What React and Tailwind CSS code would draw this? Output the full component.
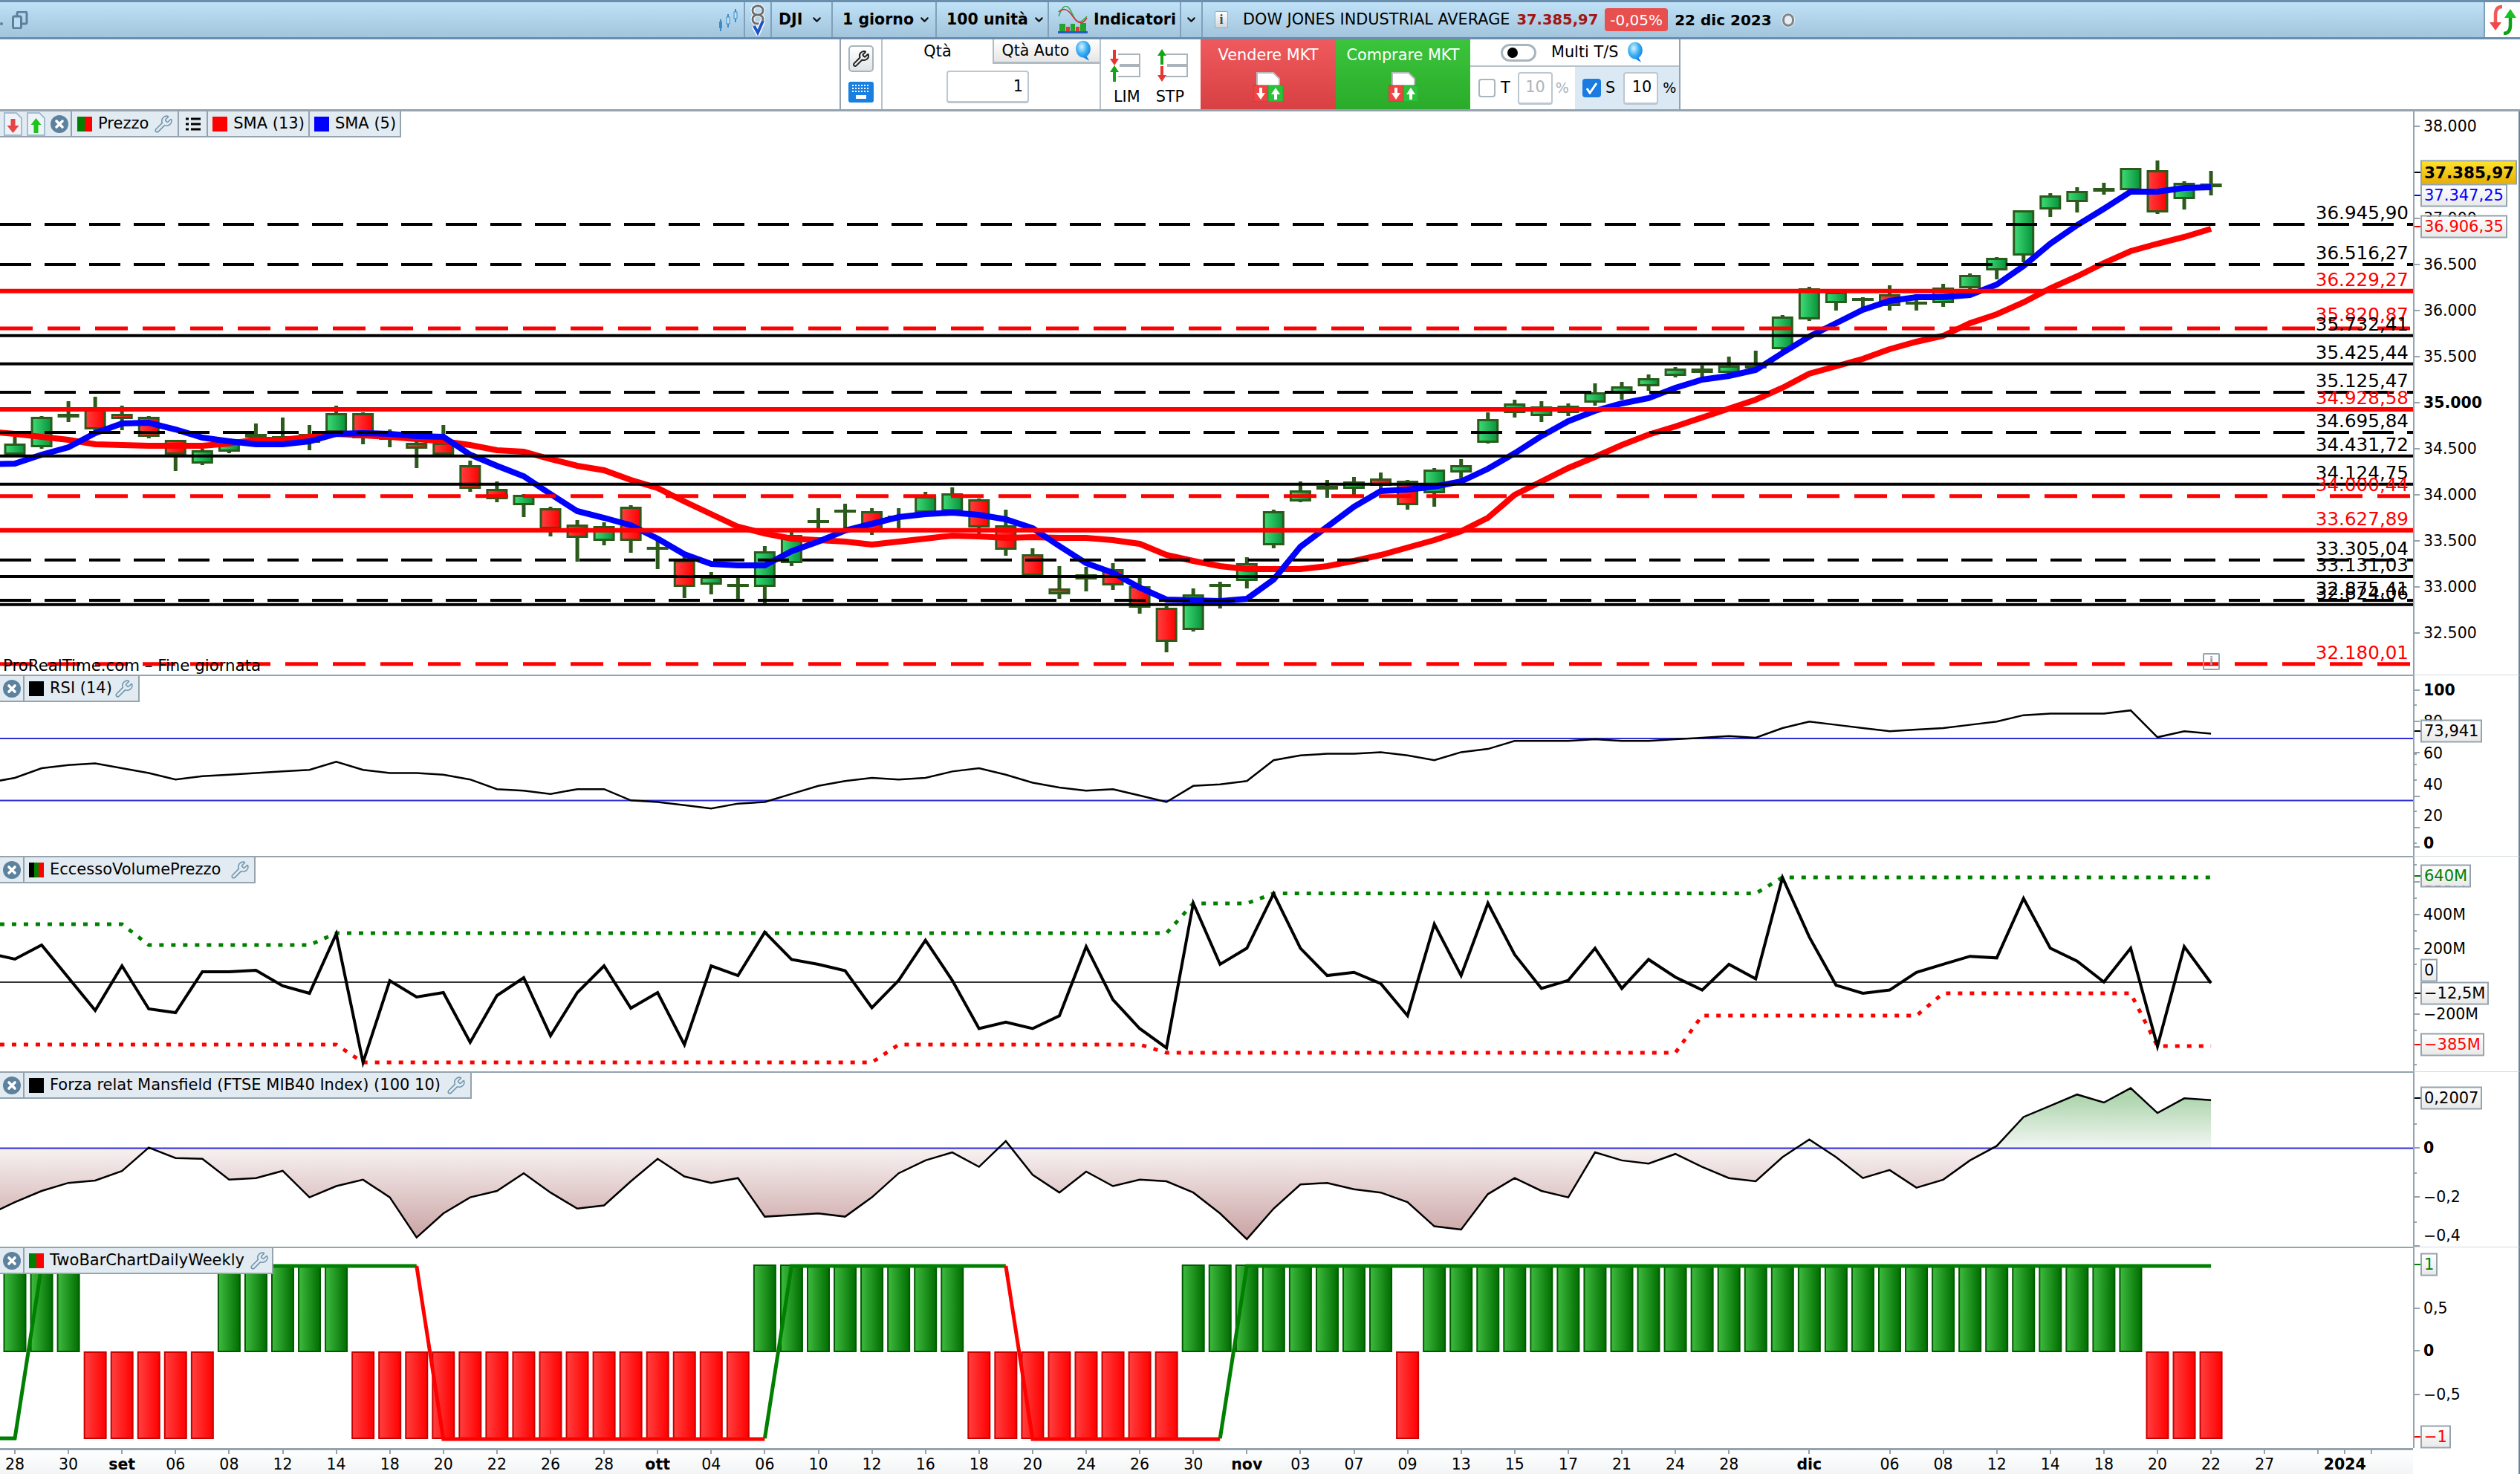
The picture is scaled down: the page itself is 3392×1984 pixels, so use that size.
import React from "react";
import { ChevronDown, Wrench } from "lucide-react";

const T = 3392 / 1568;
const X = (i) => 20 + 36.05 * i;
const pts = (arr) => arr.map((y, k) => `${X(k - 1)},${y}`).join(" ");

// [type, body top, body bottom, wick top, wick bottom]
const candles = [
  ["g", 597, 612, 588, 614], ["g", 561, 602, 560, 604], ["g", 557, 562, 540, 568], ["r", 548, 578, 534, 580],
  ["r", 557, 564, 546, 579], ["r", 561, 588, 560, 590], ["r", 592, 612, 592, 634], ["g", 606, 624, 604, 626],
  ["g", 595, 608, 590, 610], ["g", 584, 589, 570, 593], ["g", 587, 591, 562, 595], ["g", 584, 596, 572, 606],
  ["g", 556, 582, 546, 584], ["r", 556, 590, 555, 598], ["g", 583, 592, 578, 602], ["r", 596, 604, 594, 630],
  ["r", 596, 612, 572, 612], ["r", 626, 658, 620, 662], ["r", 658, 672, 648, 676], ["g", 666, 680, 665, 696],
  ["r", 684, 712, 682, 722], ["r", 706, 724, 700, 756], ["g", 708, 728, 703, 734], ["r", 682, 728, 680, 744],
  ["g", 736, 738, 728, 766], ["r", 754, 790, 746, 805], ["g", 776, 787, 770, 800], ["g", 786, 790, 776, 806],
  ["g", 742, 790, 735, 812], ["g", 720, 758, 716, 762], ["g", 700, 702, 684, 712], ["g", 686, 689, 678, 712],
  ["r", 688, 714, 684, 720], ["g", 694, 697, 684, 712], ["g", 668, 690, 662, 694], ["g", 664, 688, 656, 692],
  ["r", 672, 710, 671, 718], ["r", 707, 740, 686, 748], ["r", 746, 775, 738, 776], ["r", 792, 800, 762, 806],
  ["g", 773, 780, 763, 796], ["r", 766, 788, 758, 794], ["r", 789, 818, 777, 826], ["r", 818, 864, 816, 878],
  ["g", 800, 848, 792, 850], ["g", 786, 787, 783, 819], ["g", 758, 782, 750, 792], ["g", 688, 734, 686, 738],
  ["g", 660, 675, 648, 676], ["g", 654, 659, 646, 670], ["g", 648, 658, 642, 666], ["r", 644, 654, 636, 660],
  ["r", 647, 680, 646, 686], ["g", 632, 664, 630, 682], ["g", 626, 636, 618, 644], ["g", 564, 596, 555, 597],
  ["g", 543, 556, 538, 562], ["g", 547, 560, 540, 568], ["g", 546, 556, 543, 560], ["g", 528, 542, 516, 546],
  ["g", 520, 530, 514, 538], ["g", 509, 520, 504, 526], ["g", 496, 506, 494, 508], ["r", 496, 502, 492, 508],
  ["g", 492, 502, 480, 504], ["g", 492, 494, 472, 494], ["g", 426, 470, 424, 472], ["g", 388, 430, 386, 432],
  ["g", 393, 408, 392, 418], ["g", 401, 404, 400, 417], ["r", 396, 412, 384, 418], ["g", 406, 408, 396, 418],
  ["g", 387, 408, 382, 413], ["g", 370, 388, 368, 389], ["g", 347, 364, 346, 376], ["g", 283, 344, 283, 353],
  ["g", 263, 282, 260, 292], ["g", 257, 272, 252, 286], ["r", 253, 258, 246, 262], ["g", 226, 256, 226, 256],
  ["r", 229, 286, 216, 288], ["g", 246, 268, 244, 282], ["g", 247, 252, 230, 263],
];

const sma5 = [625, 624, 612, 602, 583, 570, 569, 578, 589, 594, 598, 598, 594, 584, 583, 584, 587, 588, 612, 627, 641, 665, 688, 697, 707, 725, 746, 759, 761, 761, 742, 729, 714, 705, 696, 692, 690, 693, 699, 711, 735, 758, 771, 791, 807, 808, 809, 806, 780, 736, 709, 682, 661, 659, 655, 648, 631, 610, 587, 567, 553, 543, 536, 522, 511, 506, 498, 475, 453, 435, 417, 405, 400, 400, 397, 383, 358, 328, 303, 281, 258, 258, 253, 252];
const sma13 = [581, 584, 588, 592, 598, 599, 600, 600, 600, 597, 592, 592, 588, 584, 586, 588, 591, 594, 599, 606, 608, 618, 627, 633, 646, 657, 675, 692, 709, 718, 725, 727, 729, 733, 729, 725, 721, 722, 724, 723, 724, 724, 727, 732, 747, 755, 762, 766, 766, 766, 762, 755, 747, 737, 727, 715, 697, 666, 648, 630, 615, 599, 585, 574, 562, 550, 538, 522, 503, 493, 483, 470, 460, 452, 435, 423, 407, 388, 372, 354, 338, 328, 319, 308];

const rsi = [487, 484, 478, 476, 475, 478, 481, 485, 483, 482, 481, 480, 479, 474, 479, 481, 481, 482, 485, 491, 492, 494, 491, 491, 498, 499, 501, 503, 500, 499, 494, 489, 486, 484, 485, 484, 480, 478, 482, 487, 490, 492, 491, 495, 499, 489, 488, 486, 473, 470, 469, 469, 468, 470, 473, 468, 466, 461, 461, 461, 460, 461, 461, 460, 459, 458, 459, 453, 449, 451, 453, 455, 454, 453, 451, 449, 445, 444, 444, 444, 442, 458.7, 455, 456.5].map((v) => v * T);

const ecc = [1283, 1291, 1272, 1316, 1360, 1300, 1358, 1363, 1308, 1308, 1306, 1327, 1337, 1257, 1430, 1320, 1342, 1336, 1403, 1340, 1316, 1394, 1336, 1300, 1357, 1336].concat(
  [650, 601, 607, 580, 597, 600, 604, 627, 610, 585, 610, 640, 636, 640, 632, 589, 622, 640, 652, 562, 600, 590, 556, 590, 607, 605, 612, 632, 575, 607, 562, 594, 615, 610, 590, 615, 597, 608, 616, 600, 609, 546, 583, 613, 618, 616, 605, 600, 595, 596, 559, 590, 598, 611, 590, 651, 589, 611.7].map((v) => v * T)
);

const forza = [756, 748, 741, 736, 734.5, 728.6, 714, 720.5, 721, 734, 733, 728.5, 745, 738, 734, 745, 770, 755, 745, 741, 730, 742, 752, 750, 735, 721, 732, 736, 733, 757, 756, 755, 757, 745, 730, 722, 717, 726, 710, 731, 742, 729, 738, 734, 735, 742, 755, 771, 752, 737, 736, 740, 742, 748, 763, 765, 743, 733, 741, 745, 717, 722, 724, 718, 726, 733, 735, 720, 709, 720, 733, 728, 739, 734, 722, 713, 695, 688, 681, 686, 677, 692.5, 683.4, 684.5].map((v) => v * T);

const levels = [
  { y: 302, label: "36.945,90", kind: "bd" },
  { y: 356, label: "36.516,27", kind: "bd" },
  { y: 391.7, label: "36.229,27", kind: "rs" },
  { y: 442, label: "35.820,87", kind: "rd", up: 3 },
  { y: 451.7, label: "35.732,41", kind: "bs" },
  { y: 489.7, label: "35.425,44", kind: "bs" },
  { y: 528, label: "35.125,47", kind: "bd" },
  { y: 551, label: "34.928,58", kind: "rs" },
  { y: 582, label: "34.695,84", kind: "bd" },
  { y: 613.7, label: "34.431,72", kind: "bs" },
  { y: 651.7, label: "34.124,75", kind: "bs" },
  { y: 667.7, label: "34.000,44", kind: "rd" },
  { y: 713.7, label: "33.627,89", kind: "rs" },
  { y: 753.7, label: "33.305,04", kind: "bd" },
  { y: 776, label: "33.131,03", kind: "bs" },
  { y: 808, label: "32.875,41", kind: "bd" },
  { y: 813.7, label: "32.824,06", kind: "bs" },
  { y: 893.7, label: "32.180,01", kind: "rd" },
];

const dates = [
  [0, "28"], [2, "30"], [4, "set", 1], [6, "06"], [8, "08"], [10, "12"], [12, "14"], [14, "18"], [16, "20"], [18, "22"], [20, "26"], [22, "28"],
  [24, "ott", 1], [26, "04"], [28, "06"], [30, "10"], [32, "12"], [34, "16"], [36, "18"], [38, "20"], [40, "24"], [42, "26"], [44, "30"],
  [46, "nov", 1], [48, "03"], [50, "07"], [52, "09"], [54, "13"], [56, "15"], [58, "17"], [60, "21"], [62, "24"], [64, "28"],
  [67, "dic", 1], [70, "06"], [72, "08"], [74, "12"], [76, "14"], [78, "18"], [80, "20"], [82, "22"], [84, "27"], [86, ""], [87, "2024", 1], [88, ""],
];

const isRedBar = (i) => (i >= 3 && i <= 7) || (i >= 13 && i <= 27) || (i >= 36 && i <= 43) || i === 52 || i >= 80;

const py = (p) => 170 + (38000 - p) * 0.124;

const XCircle = () => (
  <svg width="26" height="26" viewBox="0 0 26 26" className="shrink-0">
    <circle cx="13" cy="13" r="12" fill="#5d829e" />
    <path d="M9 9l8 8M17 9l-8 8" stroke="#fff" strokeWidth="3.6" strokeLinecap="round" />
  </svg>
);

const Spanner = () => <Wrench size={26} strokeWidth={1.4} color="#6f94ae" className="shrink-0 -scale-x-100 rotate-90" />;

const DocArrow = ({ up }) => (
  <svg width="25" height="34" viewBox="0 0 25 34" className="shrink-0">
    <path d="M1 2h16l7 7v23H1z" fill="#edf3f7" stroke="#a3bdd0" strokeWidth="2" />
    {up ? (
      <path d="M12.5 9l7 9h-4v11h-6V18h-4z" fill="#1cc41c" />
    ) : (
      <path d="M12.5 29l-8-10h5V10h6v9h5z" fill="#e84444" />
    )}
  </svg>
);

const Bubble = ({ id }) => (
  <svg width="22" height="29" viewBox="0 0 25 34" className="shrink-0">
    <defs>
      <radialGradient id={id} cx="0.4" cy="0.3" r="0.7">
        <stop offset="0" stopColor="#d8f3ff" />
        <stop offset="0.5" stopColor="#3fb3f5" />
        <stop offset="1" stopColor="#0b79dc" />
      </radialGradient>
    </defs>
    <path d="M12.5 1C19 1 24 6.500 24 13.500c0 6-3 10-6 12l4 7-9-5C5.500 27.500 1 21 1 13.500 1 6.500 6 1 12.500 1z" fill={`url(#${id})`} />
  </svg>
);

const Swatch = ({ children }) => <div className="flex w-[20px] h-[20px] shrink-0 overflow-hidden">{children}</div>;

const Legend = ({ className, swatch, label, textW }) => (
  <div className={`absolute top-0 left-0 z-10 flex items-center h-[35px] bg-[#e2ebf1] border-b-2 border-r-2 border-[#94a3ad] ${className}`}>
    <div className="flex items-center justify-center w-[33px] h-full border-r-2 border-[#94a3ad]">
      <XCircle />
    </div>
    <div className="ml-[6px]">
      <Swatch>{swatch}</Swatch>
    </div>
    <span className={`ml-[8px] text-[21px] leading-none whitespace-nowrap ${textW}`}>{label}</span>
    <div className="ml-[6px]">
      <Spanner />
    </div>
  </div>
);

const Scale = ({ ticks, labels, tags, className = "" }) => (
  <div className={`relative w-[144px] shrink-0 border-l-2 border-r-2 border-l-[#94a3ad] border-r-[#6b8294] ${className}`}>
    {ticks.map(([y, long], k) => (
      <span key={k} className={`absolute left-0 h-[2px] bg-[#94a3ad] ${long ? "w-[7px]" : "w-[3px]"}`} style={{ top: y - 1 }} />
    ))}
    {labels.map(([y, text, bold], k) => (
      <span
        key={k}
        className={`absolute left-[12px] -translate-y-1/2 text-[20.5px] leading-none whitespace-nowrap text-black ${bold ? "font-bold" : ""}`}
        style={{ top: y }}
      >
        {text}
      </span>
    ))}
    {tags.map(({ y, text, cls, tick }, k) => (
      <React.Fragment key={k}>
        <span className={`absolute left-0 w-[8px] h-[2px] ${tick}`} style={{ top: y - 1 }} />
        <span
          className={`absolute left-[8px] z-10 -translate-y-1/2 flex items-center h-[31px] px-[3px] border-2 border-[#94a3ad] text-[21px] leading-none whitespace-nowrap bg-linear-to-b from-white to-[#e9e9e9] ${cls}`}
          style={{ top: y }}
        >
          {text}
        </span>
      </React.Fragment>
    ))}
  </div>
);

const TopCell = ({ className, children }) => (
  <div className={`flex items-center h-full border-r-2 border-[#7fa0b8] shrink-0 ${className}`}>{children}</div>
);

const Chevron = () => <ChevronDown size={17} strokeWidth={3} color="#111" className="shrink-0" />;

const TopBar = () => (
  <div className="flex h-[53px] shrink-0 border-t-[3px] border-b-[3px] border-[#6a8eab] bg-linear-to-b from-[#bfe2f8] to-[#a2c4dc] text-[20.5px] text-black">
    <TopCell className="w-[1003px] border-r-2">
      <span className="w-[4px] h-[4px] mt-[11px] rounded-full bg-[#5d7f9a]" />
      <svg width="22" height="24" viewBox="0 0 22 24" className="ml-[12px] mr-auto">
        <rect x="7" y="1" width="13" height="16" rx="2" fill="none" stroke="#5d7f9a" strokeWidth="3" />
        <rect x="1.500" y="7" width="11" height="16" rx="2" fill="#bcdcf2" stroke="#5d7f9a" strokeWidth="3" />
      </svg>
      <svg width="26" height="32" viewBox="0 0 26 32" className="mr-[8px]">
        <path d="M3 15v16M13 8v18M23 1v18" stroke="#3a8cc8" strokeWidth="2" />
        <rect x="1" y="18" width="4" height="9" fill="#3a8cc8" />
        <rect x="11" y="12" width="4" height="9" fill="#bfe2f8" stroke="#3a8cc8" />
        <rect x="21" y="5" width="4" height="9" fill="#bfe2f8" stroke="#3a8cc8" />
      </svg>
    </TopCell>
    <TopCell className="w-[36px] justify-center">
      <svg width="24" height="42" viewBox="0 0 24 42">
        <path d="M12 2c-5 0-7 3-7 6s2 6 7 6 7-3 7-6-2-6-7-6zM12 14c-5 0-7 3-7 6s2 6 7 6 7-3 7-6-2-6-7-6z" fill="none" stroke="#fff" strokeWidth="5" />
        <path d="M12 2c-5 0-7 3-7 6s2 6 7 6 7-3 7-6-2-6-7-6zM12 14c-5 0-7 3-7 6s2 6 7 6 7-3 7-6-2-6-7-6z" fill="none" stroke="#6f6f6f" strokeWidth="3" />
        <path d="M7 29l5 9 7-16" fill="none" stroke="#fff" strokeWidth="7" />
        <path d="M7 29l5 9 7-16" fill="none" stroke="#1d55c8" strokeWidth="4" />
      </svg>
    </TopCell>
    <TopCell className="w-[82px] pl-[9px] gap-[11px] font-bold">
      <span>DJI</span>
      <Chevron />
    </TopCell>
    <TopCell className="w-[140px] pl-[13px] gap-[6px] font-bold">
      <span>1 giorno</span>
      <Chevron />
    </TopCell>
    <TopCell className="w-[151px] pl-[13px] gap-[6px] font-bold">
      <span>100 unità</span>
      <Chevron />
    </TopCell>
    <TopCell className="w-[178px] pl-[12px] gap-[8px] font-bold">
      <svg width="40" height="38" viewBox="0 0 40 38" className="shrink-0">
        <path d="M1 14C8-6 14-2 20 12s12 10 19 2" fill="none" stroke="#2fae4f" strokeWidth="1.600" />
        <path d="M1 8c7-6 12-4 19 6s13 12 19 2" fill="none" stroke="#d62f2f" strokeWidth="1.600" />
        <rect x="2" y="24" width="8" height="10" fill="#22a52c" />
        <rect x="11" y="28" width="5" height="6" fill="#e03a3a" />
        <rect x="17" y="24" width="6" height="10" fill="#22a52c" />
        <rect x="24" y="28" width="5" height="6" fill="#e03a3a" />
        <rect x="30" y="23" width="8" height="11" fill="#22a52c" />
        <rect x="0" y="34" width="40" height="3" fill="#1f5fc4" />
      </svg>
      <span>Indicatori</span>
    </TopCell>
    <TopCell className="w-[29px] justify-center">
      <Chevron />
    </TopCell>
    <div className="flex items-center flex-1 min-w-0 pl-[16px]">
      <span className="flex items-center justify-center w-[18px] h-[23px] mr-[20px] rounded-[2px] border border-[#9aa6ad] bg-linear-to-b from-white to-[#cfd6da] font-bold text-[18px] text-[#444] font-['Liberation_Serif',serif]">
        i
      </span>
      <span className="text-[20.8px] mr-[9px] whitespace-nowrap">DOW JONES INDUSTRIAL AVERAGE</span>
      <span className="font-bold text-[19.500px] text-[#a31414] mr-[9px] whitespace-nowrap">37.385,97</span>
      <span className="flex items-center justify-center w-[85px] h-[31px] mr-[9px] rounded-[4px] bg-[#e85050] text-white text-[20px]">-0,05%</span>
      <span className="font-bold text-[20px] whitespace-nowrap">22 dic 2023</span>
      <span className="w-[16px] h-[18px] ml-[14px] rounded-full border-[3px] border-[#808488] bg-[#e6edf2] outline outline-[#e6f0f6]" />
    </div>
    <div className="flex items-center justify-center w-[49px] h-full bg-white border-l-2 border-[#7fa0b8] shrink-0">
      <svg width="38" height="42" viewBox="0 0 38 42">
        <path d="M18 3C11 3 9 8 9 14v12" fill="none" stroke="#f05a5a" strokeWidth="4.500" />
        <path d="M1 24h16L9 35z" fill="#ee4a4a" />
        <path d="M20 39c7 0 9-5 9-11V17" fill="none" stroke="#0fa018" strokeWidth="4.500" />
        <path d="M21 18h16L29 6z" fill="#18c024" />
      </svg>
    </div>
  </div>
);

const LimIcon = ({ flip }) => (
  <svg width="42" height="44" viewBox="0 0 42 44">
    <path d="M12 7h29v14H18M12 37h29V23H18" fill="none" stroke="#a9b4bb" strokeWidth="2" />
    <rect x="14" y="20" width="27" height="4" fill="#a9b4bb" />
    {flip ? (
      <>
        <path d="M7 0l6 9H9v12H5V9H1z" fill="#14a514" />
        <path d="M7 44l-6-9h4V23h4v12h4z" fill="#e53535" />
      </>
    ) : (
      <>
        <path d="M7 22l-6-9h4V1h4v12h4z" fill="#e53535" />
        <path d="M7 22l6 9H9v13H5V31H1z" fill="#14a514" />
      </>
    )}
  </svg>
);

const MarketIcon = () => (
  <svg width="40" height="40" viewBox="0 0 40 40" className="mt-[7px]">
    <path d="M5 1h22l8 8v14H5z" fill="#fff" stroke="#b9b9b9" strokeWidth="2" />
    <rect x="0" y="18" width="20" height="22" fill="#ef4444" stroke="#d23030" strokeWidth="1" />
    <rect x="20" y="18" width="20" height="22" fill="#2cc13a" stroke="#1fa52a" strokeWidth="1" />
    <path d="M10 37l-6-9h4v-7h4v7h4z" fill="#fff" />
    <path d="M30 21l6 9h-4v7h-4v-7h-4z" fill="#fff" />
  </svg>
);

const InputBox = ({ className, children }) => (
  <div className={`flex items-center justify-end h-[44px] rounded-[4px] border-2 border-[#bcc7cf] border-b-[3px] bg-white ${className}`}>{children}</div>
);

const TradeRow = () => (
  <div className="flex h-[97px] shrink-0 border-b-[3px] border-[#94a3ad] text-[20.8px] text-black">
    <div className="w-[1130px] shrink-0" />
    <div className="flex w-[1132px] shrink-0 border-l-2 border-r-2 border-[#94a3ad]">
      <div className="flex flex-col items-center w-[56px] shrink-0 border-r-2 border-[#b6c3cc] pt-[8px] gap-[13px]">
        <div className="flex items-center justify-center w-[34px] h-[36px] rounded-[5px] border-2 border-[#a8b4bc] bg-linear-to-b from-white to-[#dfe4e7]">
          <Wrench size={24} strokeWidth={2} color="#222" className="-scale-x-100 rotate-90" />
        </div>
        <svg width="34" height="28" viewBox="0 0 34 28">
          <rect width="34" height="28" rx="3" fill="#1a80e0" />
          <path d="M5 5h24M5 9h24M5 13h24" stroke="#fff" strokeWidth="2" strokeDasharray="2 2" />
          <rect x="10" y="18" width="14" height="5" fill="#fff" />
        </svg>
      </div>
      <div className="relative w-[294px] shrink-0 border-r-2 border-[#b6c3cc]">
        <div className="flex h-[33px]">
          <div className="flex items-center justify-center w-[148px]">Qtà</div>
          <div className="flex items-center justify-center gap-[8px] flex-1 border-l-2 border-b-[3px] border-[#b0bcc4] bg-linear-to-b from-white to-[#e6e6e6]">
            <span className="text-[20.5px] whitespace-nowrap">Qtà Auto</span>
            <Bubble id="bubble-qty" />
          </div>
        </div>
        <div className="flex mt-[9px] ml-[86px]">
          <InputBox className="w-[111px] pr-[6px]">1</InputBox>
        </div>
      </div>
      <div className="flex flex-col w-[134px] shrink-0">
        <div className="flex pl-[11px] gap-[22px] pt-[13px]">
          <LimIcon />
          <LimIcon flip />
        </div>
        <div className="flex pl-[17px] gap-[21px] mt-[5px]">
          <span>LIM</span>
          <span>STP</span>
        </div>
      </div>
      <div className="flex flex-col items-center w-[182px] shrink-0 pt-[6px] bg-linear-to-b from-[#ef5a5e] to-[#d84043] text-white">
        <span>Vendere MKT</span>
        <MarketIcon />
      </div>
      <div className="flex flex-col items-center w-[181px] shrink-0 pt-[6px] bg-linear-to-b from-[#3cc43c] to-[#2aac2a] text-white">
        <span>Comprare MKT</span>
        <MarketIcon />
      </div>
      <div className="flex flex-col flex-1 min-w-0">
        <div className="flex items-center h-[37px] pl-[41px] border-b-2 border-[#b6c3cc]">
          <span className="relative w-[48px] h-[24px] rounded-full border-[3px] border-[#a9b5bd] bg-white">
            <span className="absolute left-[6px] top-[2px] w-[14px] h-[14px] rounded-full bg-black" />
          </span>
          <span className="ml-[20px] mr-[12px] whitespace-nowrap">Multi T/S</span>
          <Bubble id="bubble-multi" />
        </div>
        <div className="flex flex-1">
          <div className="flex items-center w-[141px] pl-[11px]">
            <span className="w-[23px] h-[25px] rounded-[4px] border-2 border-[#a9b5bd] bg-white" />
            <span className="ml-[7px]">T</span>
            <InputBox className="w-[47px] ml-[10px] pr-[8px] text-[#a9b5bd]">10</InputBox>
            <span className="ml-[4px] text-[#a9b5bd] text-[19px]">%</span>
          </div>
          <div className="flex items-center flex-1 pl-[10px] bg-[#dbe9f5]">
            <span className="flex items-center justify-center w-[25px] h-[25px] rounded-[4px] bg-[#1a7be0]">
              <svg width="17" height="17" viewBox="0 0 17 17">
                <path d="M2 9l4 6 9-13" fill="none" stroke="#fff" strokeWidth="3" />
              </svg>
            </span>
            <span className="ml-[6px]">S</span>
            <InputBox className="w-[47px] ml-[11px] pr-[7px]">10</InputBox>
            <span className="ml-[6px] text-[19px]">%</span>
          </div>
        </div>
      </div>
    </div>
    <div className="flex-1" />
  </div>
);

const Defs = () => (
  <svg width="0" height="0" className="absolute">
    <defs>
      <linearGradient id="cG">
        <stop offset="0" stopColor="#3fdc78" />
        <stop offset="1" stopColor="#07923a" />
      </linearGradient>
      <linearGradient id="cR">
        <stop offset="0" stopColor="#ff4040" />
        <stop offset="1" stopColor="#ff0000" />
      </linearGradient>
      <linearGradient id="bG">
        <stop offset="0" stopColor="#3fbb3f" />
        <stop offset="1" stopColor="#006c00" />
      </linearGradient>
      <linearGradient id="bR">
        <stop offset="0" stopColor="#ff4040" />
        <stop offset="1" stopColor="#ff0000" />
      </linearGradient>
      <linearGradient id="fz" gradientUnits="userSpaceOnUse" x1="0" y1="1477" x2="0" y2="1670">
        <stop offset="0" stopColor="#aed5ae" />
        <stop offset="0.352" stopColor="#f3f7f3" />
        <stop offset="0.352" stopColor="#f8f2f2" />
        <stop offset="1" stopColor="#c9a1a1" />
      </linearGradient>
    </defs>
  </svg>
);

const PriceChart = () => (
  <svg className="block w-full h-full" viewBox="0 150 3248 758">
    {candles.map(([t, top, bot, hi, lo], i) => (
      <g key={i}>
        <rect x={X(i) - 2.5} y={hi} width="5" height={lo - hi} fill="#2b5a1a" />
        <rect x={X(i) - 13} y={top + 1.5} width="26" height={Math.max(bot - top - 3, 1)} fill={t === "g" ? "url(#cG)" : "url(#cR)"} stroke="#2b5a1a" strokeWidth="3" />
      </g>
    ))}
    <polyline points={pts(sma13)} fill="none" stroke="#ff0000" strokeWidth="8" />
    <polyline points={pts(sma5)} fill="none" stroke="#0000ff" strokeWidth="8" />
    {levels.map((l, k) => {
      const red = l.kind[0] === "r";
      const dash = l.kind === "bd" ? "42 18" : l.kind === "rd" ? "44 20" : undefined;
      const w = l.kind === "rs" ? 6 : l.kind === "rd" ? 5 : 4;
      return <line key={k} x1="0" x2="3248" y1={l.y} y2={l.y} stroke={red ? "#ff0000" : "#000"} strokeWidth={w} strokeDasharray={dash} />;
    })}
  </svg>
);

const App = () => {
  const mainTicks = [38000, 37500, 37000, 36500, 36000, 35500, 35000, 34500, 34000, 33500, 33000, 32500].map((p) => [py(p) - 150, 1]);
  const mainLabels = [
    [py(38000) - 150, "38.000"], [py(37000) - 150, "37.000"], [py(36500) - 150, "36.500"], [py(36000) - 150, "36.000"], [py(35500) - 150, "35.500"],
    [py(35000) - 150, "35.000", 1], [py(34500) - 150, "34.500"], [py(34000) - 150, "34.000"], [py(33500) - 150, "33.500"], [py(33000) - 150, "33.000"], [py(32500) - 150, "32.500"],
  ];
  const greenLine = [[-1, 1936], [0, 1936], [1, 1704], [15, 1704]];
  const redLine = [[15, 1704], [16, 1937], [28, 1937]];
  const greenLine2 = [[28, 1936], [29, 1704], [37, 1704]];
  const redLine2 = [[37, 1704], [38, 1937], [45, 1937]];
  const greenLine3 = [[45, 1936], [46, 1704], [82, 1704]];
  const seg = (a) => a.map(([i, y]) => `${X(i)},${y}`).join(" ");

  return (
    <div className="relative flex flex-col w-[3392px] h-[1984px] overflow-hidden bg-white text-black font-['DejaVu_Sans',sans-serif]">
      <Defs />
      <TopBar />
      <TradeRow />

      {/* Price panel */}
      <div className="flex h-[758px] shrink-0">
        <div className="relative w-[3248px] shrink-0">
          <PriceChart />
          <div className="absolute top-0 left-0 z-10 flex items-center h-[35px] bg-[#e2ebf1] border-b-2 border-r-2 border-[#94a3ad] text-[21px] leading-none">
            <div className="flex items-center gap-[6px] w-[97px] h-full pl-[5px] border-r-2 border-[#94a3ad]">
              <DocArrow />
              <DocArrow up />
              <XCircle />
            </div>
            <div className="flex items-center h-full pl-[7px] pr-[6px] border-r-2 border-[#94a3ad]">
              <Swatch>
                <span className="w-1/2 bg-[#008000]" />
                <span className="w-1/2 bg-[#ff0000]" />
              </Swatch>
              <span className="ml-[8px]">Prezzo</span>
              <span className="ml-[7px]">
                <Spanner />
              </span>
            </div>
            <div className="flex items-center justify-center w-[39px] h-full border-r-2 border-[#94a3ad]">
              <svg width="20" height="20" viewBox="0 0 20 20">
                <path d="M0 3h4M7 3h13M0 10h4M7 10h13M0 17h4M7 17h13" stroke="#000" strokeWidth="3" />
              </svg>
            </div>
            <div className="flex items-center h-full pl-[6px] pr-[5px] border-r-2 border-[#94a3ad]">
              <span className="w-[20px] h-[20px] bg-[#ff0000]" />
              <span className="ml-[8px]">SMA (13)</span>
            </div>
            <div className="flex items-center h-full pl-[6px] pr-[5px]">
              <span className="w-[20px] h-[20px] bg-[#0000ff]" />
              <span className="ml-[8px]">SMA (5)</span>
            </div>
          </div>
          {levels.map((l, k) => (
            <span
              key={k}
              className={`absolute right-[6px] text-[24.6px] leading-none whitespace-nowrap ${l.kind[0] === "r" ? "text-[#ff0000]" : "text-black"}`}
              style={{ top: l.y - 150 - 27 - (l.up || 0) }}
            >
              {l.label}
            </span>
          ))}
          <span className="absolute left-[4px] top-[735px] text-[21.3px] leading-none whitespace-nowrap">ProRealTime.com – Fine giornata</span>
          <span className="absolute left-[2965px] top-[729px] flex items-center justify-center w-[23px] h-[23px] rounded-[2px] border-2 border-[#94a3ad] text-[15px] font-bold text-[#94a3ad] leading-none">
            i
          </span>
        </div>
        <Scale
          ticks={mainTicks}
          labels={mainLabels}
          tags={[
            { y: 82, text: "37.385,97", cls: "font-bold !text-[21.5px] !from-[#ffe22a] !to-[#e8b000] w-[130px] !h-[33px]", tick: "bg-black" },
            { y: 113, text: "37.347,25", cls: "text-[#0000ff]", tick: "bg-[#0000ff]" },
            { y: 155, text: "36.906,35", cls: "text-[#ff0000]", tick: "bg-[#ff0000]" },
          ]}
        />
      </div>

      {/* RSI */}
      <div className="flex h-[244px] shrink-0">
        <div className="relative w-[3248px] shrink-0 border-t-2 border-[#94a3ad]">
          <svg className="block w-full h-full" viewBox="0 910 3248 242">
            <line x1="0" x2="3248" y1="994" y2="994" stroke="#2f2fd8" strokeWidth="2" />
            <line x1="0" x2="3248" y1="1077.500" y2="1077.500" stroke="#2f2fd8" strokeWidth="2" />
            <polyline points={pts(rsi)} fill="none" stroke="#000" strokeWidth="2.500" />
          </svg>
          <Legend
            className="w-[188px]"
            textW="w-[81px]"
            label="RSI (14)"
            swatch={<span className="w-full bg-black" />}
          />
        </div>
        <Scale
          className="border-t border-t-[#d3dade]"
          ticks={[[20, 1], [40, 0], [62, 1], [104, 1], [120, 0], [141, 0], [106, 0], [163, 1], [183, 0], [205, 1], [226, 0], [231, 1]]}
          labels={[[20, "100", 1], [62, "80"], [105, "60"], [147, "40"], [189, "20"], [226, "0", 1]]}
          tags={[{ y: 75, text: "73,941", cls: "", tick: "bg-black" }]}
        />
      </div>

      {/* EccessoVolumePrezzo */}
      <div className="flex h-[290px] shrink-0">
        <div className="relative w-[3248px] shrink-0 border-t-2 border-[#94a3ad]">
          <svg className="block w-full h-full" viewBox="0 1154 3248 288">
            <line x1="0" x2="2976" y1="1322" y2="1322" stroke="#333" strokeWidth="2" />
            <polyline
              points={seg([[-1, 1244], [4, 1244], [5, 1272], [11, 1272], [12, 1256], [43, 1256], [44, 1216], [46, 1216], [47, 1202.6], [65, 1202.6], [66, 1181], [82, 1181]])}
              fill="none"
              stroke="#008000"
              strokeWidth="5"
              strokeDasharray="6 10"
            />
            <polyline
              points={seg([[-1, 1406], [12, 1406], [13, 1430], [32, 1430], [33, 1406], [42, 1406], [43, 1417], [62, 1417], [63, 1367], [71, 1367], [72, 1337], [79, 1337], [80, 1408], [82, 1408]])}
              fill="none"
              stroke="#ff0000"
              strokeWidth="5"
              strokeDasharray="6 10"
            />
            <polyline points={pts(ecc)} fill="none" stroke="#000" strokeWidth="4" />
          </svg>
          <Legend
            className="w-[344px]"
            textW="w-[237px]"
            label="EccessoVolumePrezzo"
            swatch={
              <>
                <span className="w-1/3 bg-black" />
                <span className="w-1/3 bg-[#008000]" />
                <span className="w-1/3 bg-[#ff0000]" />
              </>
            }
          />
        </div>
        <Scale
          className="border-t border-t-[#d3dade]"
          ticks={[[11, 0], [34, 1], [56, 0], [78, 1], [100, 0], [124, 1], [145, 0], [190, 0], [212, 1], [234, 0], [280, 0]]}
          labels={[[34, "600M"], [78, "400M"], [124, "200M"], [212, "−200M"]]}
          tags={[
            { y: 26, text: "640M", cls: "text-[#008000]", tick: "bg-[#008000]" },
            { y: 153, text: "0", cls: "", tick: "bg-transparent" },
            { y: 184, text: "−12,5M", cls: "", tick: "bg-black" },
            { y: 253, text: "−385M", cls: "text-[#ff0000]", tick: "bg-[#ff0000]" },
          ]}
        />
      </div>

      {/* Forza relativa Mansfield */}
      <div className="flex h-[236px] shrink-0">
        <div className="relative w-[3248px] shrink-0 border-t-2 border-[#94a3ad]">
          <svg className="block w-full h-full" viewBox="0 1444 3248 234">
            <polygon points={`0,1545.500 ${pts(forza)} ${X(82)},1545.500`} fill="url(#fz)" />
            <line x1="0" x2="3248" y1="1545.500" y2="1545.500" stroke="#2f2fd8" strokeWidth="2" />
            <polyline points={pts(forza)} fill="none" stroke="#000" strokeWidth="2.500" />
          </svg>
          <Legend
            className="w-[635px]"
            textW="w-[528px]"
            label="Forza relat Mansfield (FTSE MIB40 Index) (100 10)"
            swatch={<span className="w-full bg-black" />}
          />
        </div>
        <Scale
          className="border-t border-t-[#d3dade]"
          ticks={[[35, 1], [70, 0], [102, 1], [136, 0], [168, 1], [202, 0], [234, 1]]}
          labels={[[102, "0", 1], [168, "−0,2"], [220, "−0,4"]]}
          tags={[{ y: 35, text: "0,2007", cls: "", tick: "bg-black" }]}
        />
      </div>

      {/* TwoBarChartDailyWeekly */}
      <div className="flex h-[271px] shrink-0">
        <div className="relative w-[3248px] shrink-0 border-t-2 border-[#94a3ad]">
          <svg className="block w-full h-full" viewBox="0 1680 3248 269">
            {candles.map((_, i) =>
              isRedBar(i) ? (
                <rect key={i} x={X(i) - 14.5} y="1820" width="29" height="116" fill="url(#bR)" stroke="#c80000" strokeWidth="2" />
              ) : (
                <rect key={i} x={X(i) - 14.5} y="1703" width="29" height="116" fill="url(#bG)" stroke="#005a00" strokeWidth="2" />
              )
            )}
            <polyline points={seg(greenLine)} fill="none" stroke="#008000" strokeWidth="5" />
            <polyline points={seg(redLine)} fill="none" stroke="#ff0000" strokeWidth="5" />
            <polyline points={seg(greenLine2)} fill="none" stroke="#008000" strokeWidth="5" />
            <polyline points={seg(redLine2)} fill="none" stroke="#ff0000" strokeWidth="5" />
            <polyline points={seg(greenLine3)} fill="none" stroke="#008000" strokeWidth="5" />
          </svg>
          <Legend
            className="w-[368px]"
            textW="w-[263px]"
            label="TwoBarChartDailyWeekly"
            swatch={
              <>
                <span className="w-1/2 bg-[#008000]" />
                <span className="w-1/2 bg-[#ff0000]" />
              </>
            }
          />
        </div>
        <Scale
          className="border-t border-t-[#d3dade]"
          ticks={[[82, 1], [139, 1], [198, 1]]}
          labels={[[82, "0,5"], [139, "0", 1], [198, "−0,5"]]}
          tags={[
            { y: 23, text: "1", cls: "text-[#008000]", tick: "bg-[#008000]" },
            { y: 255, text: "−1", cls: "text-[#ff0000]", tick: "bg-[#ff0000]" },
          ]}
        />
      </div>

      {/* Date axis */}
      <div className="flex flex-1 min-h-0">
        <div className="relative w-[3248px] shrink-0 border-t-[3px] border-[#94a3ad] bg-linear-to-b from-white to-[#f2f4f5]">
          {dates.map(([i, text, bold]) => (
            <React.Fragment key={i}>
              <span className="absolute top-0 w-[2px] h-[5px] bg-[#94a3ad]" style={{ left: X(i) - 1 }} />
              <span
                className={`absolute top-[9px] -translate-x-1/2 text-[20.5px] leading-none whitespace-nowrap ${bold ? "font-bold" : ""}`}
                style={{ left: X(i) }}
              >
                {text}
              </span>
            </React.Fragment>
          ))}
        </div>
        <div className="flex-1 border-r-2 border-[#6b8294]" />
      </div>
    </div>
  );
};

export default App;
